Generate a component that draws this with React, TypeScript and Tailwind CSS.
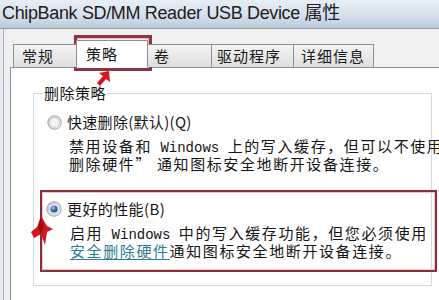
import React from 'react';

const cjk = "font-['Noto_Sans_CJK_SC','Noto_Sans',sans-serif]";

const Radio: React.FC<{ checked?: boolean; size: number }> = ({ checked, size }) => (
  <svg width={size} height={size} viewBox="0 0 16 16" className="shrink-0">
    <defs>
      <linearGradient id={checked ? 'rg-on' : 'rg-off'} x1="0" y1="0" x2="1" y2="1">
        <stop offset="0" stopColor="#c9cccf" />
        <stop offset="1" stopColor="#f7f7f7" />
      </linearGradient>
      <radialGradient id="dot" cx="0.4" cy="0.35" r="0.7">
        <stop offset="0" stopColor="#b8d4f0" />
        <stop offset="0.45" stopColor="#3f73b6" />
        <stop offset="1" stopColor="#1d3f78" />
      </radialGradient>
    </defs>
    <circle cx="8" cy="8" r="7.2" fill={`url(#${checked ? 'rg-on' : 'rg-off'})`} stroke="#9a9ea3" strokeWidth="1" />
    <circle cx="8" cy="8" r="5" fill="#f4f5f6" stroke="#c4c7ca" strokeWidth="0.8" />
    {checked && <circle cx="8" cy="8" r="3.6" fill="url(#dot)" />}
  </svg>
);

const Win: React.FC = () => (
  <span className="font-['Liberation_Mono',monospace] text-[14px] tracking-normal"> Windows </span>
);

const Tab: React.FC<{ label: string; w: number; pl: number }> = ({ label, w, pl }) => (
  <div
    className="h-[23px] mb-px border border-b-0 border-[#8d9094] bg-gradient-to-b from-[#f4f4f4] to-[#dedede] text-[15px] leading-[21px] tracking-[1px] text-[#1a1a1a] -mr-px"
    style={{ width: w, paddingLeft: pl }}
  >
    {label}
  </div>
);

export default function App() {
  return (
    <div className={`relative w-[439px] h-[300px] overflow-hidden bg-[#e7ecf1] ${cjk} text-[#151515]`}>
      {/* title bar */}
      <div className="h-[29px] pl-[2px] border-b border-[#8e9cab] bg-gradient-to-b from-[#e6edf5] via-[#d7e2ed] to-[#bccbda] font-['Liberation_Sans','Noto_Sans_CJK_SC',sans-serif] text-[18px] leading-[26px] tracking-[-0.35px] text-[#1c1c1c] whitespace-nowrap">
        ChipBank SD/MM Reader USB Device 属性
      </div>

      {/* dialog body */}
      <div className="ml-[3px] h-[271px] border-l border-[#a3acb6] bg-[#f0f0f0] pl-[6px] pt-[11px]">
        {/* tabs */}
        <div className="relative z-10 -mb-px ml-[3px] flex h-[28px] items-end">
          <Tab label="常规" w={64} pl={8} />
          <div className="h-[28px] w-[72px] border border-b-0 border-[#8d9094] bg-white pl-[9px] text-[15px] leading-[26px] tracking-[1px] text-[#1a1a1a] -mr-px">
            策略
          </div>
          <Tab label="卷" w={65} pl={6} />
          <Tab label="驱动程序" w={83} pl={5} />
          <Tab label="详细信息" w={81} pl={7} />
        </div>

        {/* tab page */}
        <div className="h-[240px] w-[460px] border border-[#8d9094] bg-white pl-[22px] pt-[25px]">
          <div className="relative w-[399px] border border-[#d3dbe2] pl-[13px] pt-[18px] pb-[13px]">
            <div className="absolute -top-[10px] left-[9px] bg-white px-px text-[15px] leading-[18px] tracking-[0.5px]">
              删除策略
            </div>

            {/* option 1 */}
            <div className="flex h-[20px] items-center gap-[5px]">
              <Radio size={15} />
              <span className="text-[15px] leading-[20px] tracking-[0.3px] whitespace-nowrap">快速删除(默认)(Q)</span>
            </div>
            <div className="mt-[6px] pl-[22px] text-[15px] leading-[15px] tracking-[1.6px] whitespace-nowrap">
              <div>
                禁用设备和<Win />上的写入缓存，但可以不使用“安全删除硬件
              </div>
              <div>删除硬件” 通知图标安全地断开设备连接。</div>
            </div>

            {/* option 2, marked */}
            <div className="mt-[19px] -ml-[7px] w-[397px] border-2 border-[#8a2f3a] pl-[4px] pt-[7px] pb-[12px] shadow-[inset_0_0_0_1px_#efc6cb]">
              <div className="flex h-[20px] items-center gap-[5px]">
                <Radio checked size={16} />
                <span className="text-[15px] leading-[20px] tracking-[0.4px] whitespace-nowrap">更好的性能(B)</span>
              </div>
              <div className="mt-[6px] pl-[24px] text-[15px] leading-[15px] tracking-[1.6px] whitespace-nowrap">
                <div>
                  启用<Win />中的写入缓存功能，但您必须使用
                </div>
                <div>
                  <span className="text-[#2a7d93] underline underline-offset-2">安全删除硬件</span>通知图标安全地断开设备连接。
                </div>
              </div>
            </div>
          </div>
        </div>
      </div>

      {/* annotation: box around selected tab */}
      <div className="pointer-events-none absolute left-[74px] top-[35px] h-[36px] w-[78px] border-[3px] border-[#8c3440] shadow-[inset_0_0_0_1px_#e9b9bf]" />

      {/* annotation arrows */}
      <svg className="pointer-events-none absolute left-0 top-0" width="439" height="300">
        <polygon points="109,71 110,82 106,79 100,86 97,83 103,76 99,73" fill="#d8141e" />
        <polygon points="41,216 47,226 53,229 47,232 45,245 41,234 34,238 31,232 37,227" fill="#d8141e" />
        <polygon points="41,216 44,228 41,234 38,228" fill="#9c0c14" />
      </svg>
    </div>
  );
}
